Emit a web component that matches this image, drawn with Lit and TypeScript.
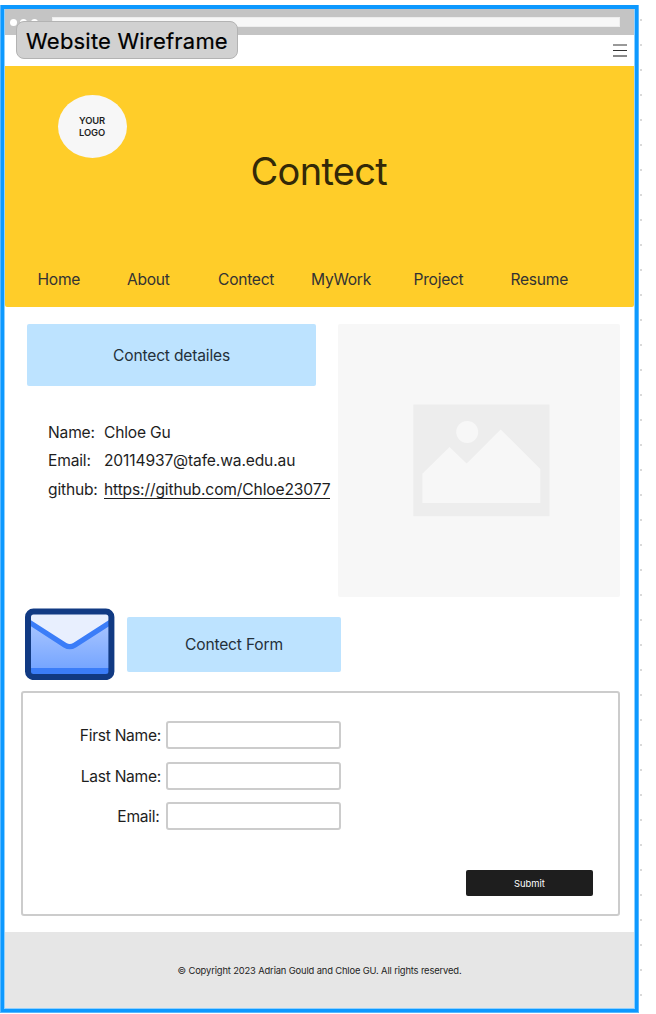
import { LitElement, html, css } from "lit";
import { customElement } from "lit/decorators.js";

@customElement("envelope-icon")
class EnvelopeIcon extends LitElement {
  static styles = css`
    :host { display: block; width: 90px; height: 72px; }
    svg { display: block; }
  `;
  render() {
    return html`<svg width="90" height="72" viewBox="0 0 90 72">
      <defs>
        <linearGradient id="body" x1="0" y1="0" x2="0" y2="1">
          <stop offset="0" stop-color="#b9d0ff" />
          <stop offset="1" stop-color="#699dff" />
        </linearGradient>
        <clipPath id="inner"><rect x="4" y="4" width="82" height="64" rx="5" /></clipPath>
      </defs>
      <g clip-path="url(#inner)">
        <rect width="90" height="72" fill="url(#body)" />
        <path d="M0 0H90V11L49 37Q45 40 41 37L0 11Z" fill="#e8effe" />
        <path d="M0 11.4L40 37.2Q44.8 40.2 49.6 37.2L90 11.4" fill="none" stroke="#3b7df8" stroke-width="5.2" />
        <rect y="60" width="90" height="12" fill="#3b7df8" />
      </g>
      <rect x="3" y="3.5" width="83.4" height="65.6" rx="5.5" fill="none" stroke="#113a83" stroke-width="6" />
    </svg>`;
  }
}

@customElement("picture-placeholder")
class PicturePlaceholder extends LitElement {
  static styles = css`
    :host {
      display: block; box-sizing: border-box; width: 282px; height: 273px;
      padding: 80px 0 0 75px; border-radius: 2px; background: #f7f7f7;
    }
    svg { display: block; }
  `;
  render() {
    return html`<svg width="137" height="113" viewBox="0 0 137 113">
      <rect x=".3" y=".5" width="136.2" height="111.6" fill="#ededed" />
      <circle cx="54.2" cy="28" r="11" fill="#f7f7f7" />
      <path d="M9.4 69.7L36.5 43L53.6 59.4L87.7 25.6L127.3 65V99H9.4Z" fill="#f7f7f7" />
    </svg>`;
  }
}

@customElement("app-root")
class AppRoot extends LitElement {
  static styles = css`
    :host {
      display: block; position: relative; box-sizing: border-box; width: 656px; height: 1014px;
      padding-top: 5px; overflow: hidden; color: #1e1e1e;
      font: 400 15.6px/20px Inter, "Liberation Sans", sans-serif; letter-spacing: -.012em;
      background: radial-gradient(circle at 1px 1px, #d9d9d9 1.1px, transparent 1.5px) 640px 19px / 25px 25px repeat-y #fff;
    }
    * { box-sizing: border-box; }
    .halo { width: 639px; height: 1008px; border: 1px solid #58b8ff; border-top: 0; }
    .edge { height: 100%; border: 3px solid #0d99ff; border-top-width: 4px; }
    .site { height: 100%; border: 1px solid #8fd0ff; border-top: 0; display: flex; flex-direction: column; background: #fff; }
    .browser { height: 26px; flex: none; display: flex; align-items: center; background: #c4c4c4; padding-left: 5px; }
    .dot { width: 7px; height: 7px; border-radius: 50%; background: #fff; margin-right: 3.3px; }
    .address { width: 568px; height: 10px; margin-left: 11px; background: #f7f7f7; border: 1px solid #ededed; }
    .menu { height: 31px; flex: none; display: flex; justify-content: flex-end; padding: 9px 7px 0 0; }
    .hero { height: 241px; flex: none; background: #ffcd29; border-radius: 0 0 2px 2px; padding-top: 29px; }
    .logo {
      width: 69px; height: 63px; margin-left: 53px; border-radius: 50%; background: #f7f7f7; padding: 1px 1px 0 0;
      display: flex; align-items: center; justify-content: center; text-align: center;
      font-size: 9.4px; line-height: 12.4px; font-weight: 600; letter-spacing: -.01em;
    }
    .title { margin: -11px 0 0; height: 48px; line-height: 48px; padding-left: 245.5px; font-size: 38px; font-weight: 400; color: #332908; letter-spacing: -.018em; }
    .nav {
      display: grid; grid-template-columns: 89.5px 91px 93px 102.5px 97px 80px;
      margin-top: 75px; padding-left: 32.5px; color: #333; letter-spacing: -.017em;
    }
    .row { display: flex; }
    .intro { height: 290px; padding: 17px 14px 0 22px; justify-content: space-between; flex: none; }
    .tag { display: flex; align-items: center; justify-content: center; border-radius: 2px; background: #bde3ff; color: #24303a; padding-top: 1px; }
    .tag-details { width: 289px; height: 62px; }
    .tag-form { width: 214px; height: 55px; margin-top: 9px; }
    .details { display: grid; grid-template-columns: 56px max-content; grid-auto-rows: 28.7px; margin: 36.6px 0 0 21px; width: 282px; }
    .value { letter-spacing: -.009em; }
    .link { border-bottom: 1px solid #1e1e1e; height: 19.5px; }
    .form-head { height: 95px; padding-left: 20px; padding-top: 11px; gap: 12px; flex: none; }
    .form { width: 599px; height: 225px; margin: -1px 0 0 16px; flex: none; border: 2px solid #ccc; border-radius: 3px; padding-top: 28px; }
    .field { align-items: center; height: 28px; margin-bottom: 13px; }
    .field + .field + .field { margin-bottom: 40px; margin-top: -1px; }
    .label { width: 138px; text-align: right; margin-right: 5px; padding-top: 1px; letter-spacing: -.018em; }
    .label-short { width: 136.5px; margin-right: 6.5px; }
    .input { width: 175px; height: 28px; border: 2px solid #ccc; border-radius: 3px; background: #fff; padding: 0 6px; font: inherit; }
    .submit {
      display: block; width: 127px; height: 26px; margin-left: 443px; border: 0; border-radius: 2px; padding: 2px 0 0;
      background: #1e1e1e; color: #fff; font: 400 9.4px/24px Inter, sans-serif; letter-spacing: 0;
    }
    .footer {
      margin-top: auto; height: 76px; padding-top: 2px; display: flex; align-items: center; justify-content: center;
      background: #e6e6e6; font-size: 9.4px; letter-spacing: -.016em;
    }
    .section-name {
      position: absolute; left: 16px; top: 21px; width: 222px; height: 38px; border: 1px solid #b3b3b3; border-radius: 8px;
      background: #d1d1d1; color: #000; text-align: center; font-size: 22px; line-height: 38px; font-weight: 400; letter-spacing: .009em;
      -webkit-text-stroke: .2px #000;
    }
  `;

  nav = ["Home", "About", "Contect", "MyWork", "Project", "Resume"];

  render() {
    return html`
      <div class="halo"><div class="edge"><div class="site">
        <div class="browser">
          <span class="dot"></span><span class="dot"></span><span class="dot"></span>
          <span class="address"></span>
        </div>
        <div class="menu">
          <svg width="14" height="14" viewBox="0 0 14 14">
            <path d="M0 1H14" stroke="#999" stroke-width="2" />
            <path d="M0 6.5H14" stroke="#333" />
            <path d="M0 12H14" stroke="#888" stroke-width="2" />
          </svg>
        </div>
        <header class="hero">
          <div class="logo">YOUR<br />LOGO</div>
          <h1 class="title">Contect</h1>
          <nav class="nav">${this.nav.map((n) => html`<span>${n}</span>`)}</nav>
        </header>
        <section class="row intro">
          <div>
            <div class="tag tag-details">Contect detailes</div>
            <div class="details">
              <span>Name:</span><span>Chloe Gu</span>
              <span>Email:</span><span class="value">20114937@tafe.wa.edu.au</span>
              <span>github:</span><span class="value link">https://github.com/Chloe23077</span>
            </div>
          </div>
          <picture-placeholder></picture-placeholder>
        </section>
        <section class="row form-head">
          <envelope-icon></envelope-icon>
          <div class="tag tag-form">Contect Form</div>
        </section>
        <section class="form">
          <div class="row field"><span class="label">First Name:</span><input class="input" /></div>
          <div class="row field"><span class="label">Last Name:</span><input class="input" /></div>
          <div class="row field"><span class="label label-short">Email:</span><input class="input" /></div>
          <button class="submit">Submit</button>
        </section>
        <footer class="footer">© Copyright 2023 Adrian Gould and Chloe GU. All rights reserved.</footer>
      </div></div></div>
      <div class="section-name">Website Wireframe</div>
    `;
  }
}
